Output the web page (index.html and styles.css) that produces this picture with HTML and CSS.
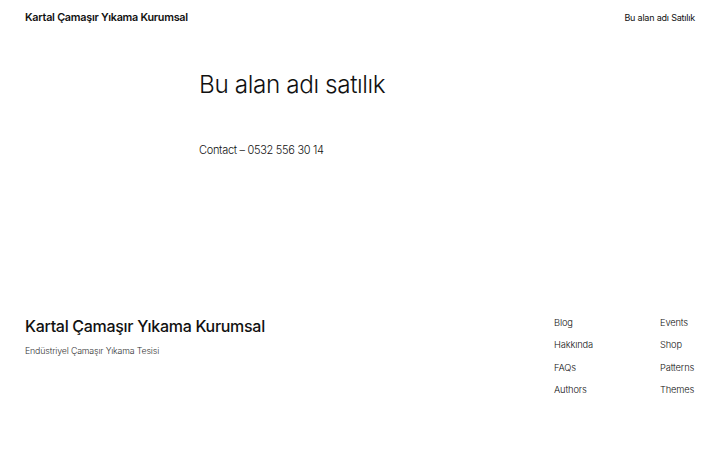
FILE: index.html
```html
<!DOCTYPE html>
<html lang="tr">
<head>
<meta charset="utf-8">
<link rel="stylesheet" href="styles.css">
</head>
<body>
<header class="site-header">
  <a class="site-title" href="#">Kartal Çamaşır Yıkama Kurumsal</a>
  <nav class="main-nav"><a href="#">Bu alan adı Satılık</a></nav>
</header>
<main class="content">
  <h1 class="page-title">Bu alan adı satılık</h1>
  <p class="contact">Contact – 0532 556 30 14</p>
</main>
<footer class="site-footer">
  <div class="brand">
    <h2 class="footer-title">Kartal Çamaşır Yıkama Kurumsal</h2>
    <p class="tagline">Endüstriyel Çamaşır Yıkama Tesisi</p>
  </div>
  <div class="footer-links">
    <ul class="col col-a">
      <li><a href="#">Blog</a></li>
      <li><a href="#">Hakkında</a></li>
      <li><a href="#">FAQs</a></li>
      <li><a href="#">Authors</a></li>
    </ul>
    <ul class="col col-b">
      <li><a href="#">Events</a></li>
      <li><a href="#">Shop</a></li>
      <li><a href="#">Patterns</a></li>
      <li><a href="#">Themes</a></li>
    </ul>
  </div>
</footer>
</body>
</html>
```
FILE: styles.css
```css
* { box-sizing: border-box; }
html, body { margin: 0; padding: 0; background: #fff; }
body {
  font-family: Inter, "Noto Sans", sans-serif;
  color: #111;
  width: 720px;
}
a { color: inherit; text-decoration: none; }

.site-header {
  display: flex;
  justify-content: space-between;
  align-items: center;
  padding: 0 25px;
  height: 35px;
}
.site-title {
  font-size: 10.8px;
  font-weight: 600;
  letter-spacing: -0.25px;
}
.main-nav {
  font-size: 9px;
  font-weight: 400;
  letter-spacing: -0.2px;
}

.content {
  width: 322px;
  margin: 0 auto;
  padding-top: 34px;
  height: 245px;
}
.page-title {
  margin: 0;
  font-size: 24.3px;
  font-weight: 300;
  letter-spacing: -0.4px;
  line-height: 30px;
}
.contact {
  margin: 42px 0 0 0;
  font-size: 11px;
  font-weight: 300;
  letter-spacing: -0.3px;
  line-height: 18px;
}

.site-footer {
  display: flex;
  justify-content: space-between;
  padding: 36px 25px 0 25px;
}
.footer-title {
  margin: 0;
  font-size: 16px;
  font-weight: 500;
  letter-spacing: -0.3px;
  line-height: 20px;
}
.tagline {
  margin: 9px 0 0 0;
  font-size: 8.8px;
  font-weight: 300;
  letter-spacing: -0.15px;
  color: #333;
}
.footer-links {
  display: flex;
}
.col {
  list-style: none;
  margin: 0;
  padding: 0;
  display: flex;
  flex-direction: column;
  gap: 8px;
  font-size: 9.3px;
  font-weight: 300;
  line-height: 14.4px;
  letter-spacing: -0.15px;
}
.col-a { width: 106px; }
.col-b { width: 35px; }
```
